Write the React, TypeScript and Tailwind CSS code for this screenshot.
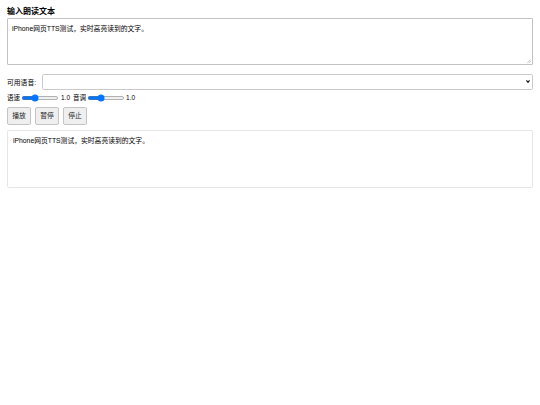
import React, { useState } from "react";

export default function App() {
  const [text, setText] = useState("iPhone网页TTS测试，实时高亮读到的文字。");
  const [rate, setRate] = useState(1);
  const [pitch, setPitch] = useState(1);
  const font = "font-['Liberation_Sans','Noto_Sans_CJK_SC',sans-serif]";
  return (
    <div className={`${font} px-[7px] pt-[7px] text-black bg-white min-h-[405px]`}>
      <div className="text-[8px] font-bold leading-[10px]">输入朗读文本</div>
      <div className="relative mt-[1px]">
        <textarea
          value={text}
          onChange={(e) => setText(e.target.value)}
          className={`${font} block w-full h-[47px] resize-none border border-[#c2c2c2] rounded-[1px] px-[4px] py-[5px] text-[6.8px] leading-[9px] outline-none`}
        />
        <svg className="absolute right-[2px] bottom-[2px] w-[4px] h-[4px]" viewBox="0 0 4 4">
          <path d="M0.5 3.8 L3.8 0.5 M2.2 3.8 L3.8 2.2" stroke="#9a9a9a" strokeWidth="0.6" />
        </svg>
      </div>
      <div className="mt-[9px] flex items-center gap-[5px]">
        <label className="text-[6.8px] leading-[9px] shrink-0">可用语音:</label>
        <div className="relative flex-1 ml-[1px]">
          <select className={`${font} block w-full h-[16px] appearance-none border border-[#cacaca] rounded-[1.5px] bg-white text-[6.8px] outline-none`}></select>
          <svg className="absolute right-[3px] top-[6px] w-[4px] h-[3px] pointer-events-none" viewBox="0 0 4 3">
            <path d="M0.4 0.4 L2 2.3 L3.6 0.4" stroke="#111" strokeWidth="1.2" fill="none" />
          </svg>
        </div>
      </div>
      <div className="mt-[1px] flex items-center h-[14px] text-[6.5px] leading-[8px]">
        <span>语速</span>
        <input
          type="range"
          min={0.5}
          max={2}
          step={0.1}
          value={rate}
          onChange={(e) => setRate(parseFloat(e.target.value))}
          className="w-[76px] [zoom:0.5] mx-[2px]"
        />
        <span className="ml-[1px]">{rate.toFixed(1)}</span>
        <span className="ml-[3px]">音调</span>
        <input
          type="range"
          min={0.5}
          max={2}
          step={0.1}
          value={pitch}
          onChange={(e) => setPitch(parseFloat(e.target.value))}
          className="w-[76px] [zoom:0.5] mx-[1px]"
        />
        <span className="ml-[1px]">{pitch.toFixed(1)}</span>
      </div>
      <div className="mt-[2px] flex gap-[4px]">
        <button className="h-[18px] w-[24px] border border-[#c4c4c4] rounded-[2px] bg-[#efefef] text-[6.8px] text-[#222]">播放</button>
        <button className="h-[18px] w-[24px] border border-[#c4c4c4] rounded-[2px] bg-[#efefef] text-[6.8px] text-[#222]">暂停</button>
        <button className="h-[18px] w-[24px] border border-[#c4c4c4] rounded-[2px] bg-[#efefef] text-[6.8px] text-[#222]">停止</button>
      </div>
      <div className="mt-[5px] h-[58px] border border-[#e6e6e6] rounded-[2px] px-[5px] py-[5px] text-[6.8px] leading-[9px]">
        {text}
      </div>
    </div>
  );
}
